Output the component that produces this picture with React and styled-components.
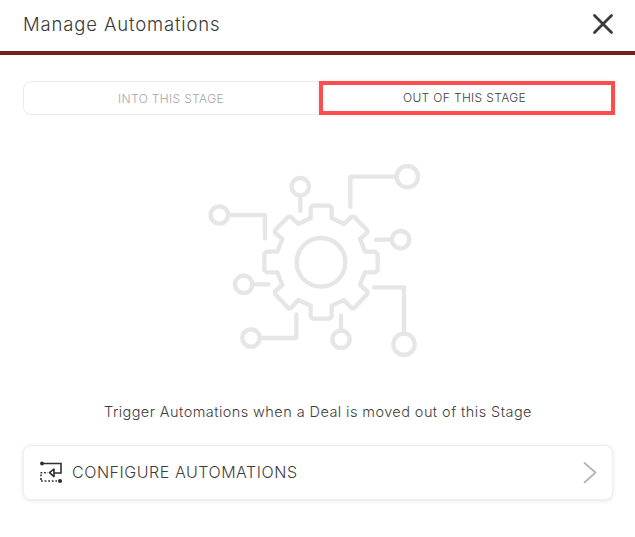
import React from 'react'
import styled, { createGlobalStyle } from 'styled-components'

const GlobalStyle = createGlobalStyle`
  html, body {
    margin: 0;
    padding: 0;
    background: #fff;
  }
  body {
    font-family: Inter, "Open Sans", sans-serif;
    color: #3d3d3d;
  }
`

const Dialog = styled.div`
  width: 635px;
  height: 537px;
  overflow: hidden;
  background: #fff;
`

const Header = styled.header`
  display: flex;
  align-items: center;
  justify-content: space-between;
  padding: 0 21px 3px 23px;
  box-sizing: border-box;
  border-bottom: 4px solid #6f2219;
  height: 55px;
`

const Title = styled.h1`
  margin: 0;
  font-size: 18.5px;
  font-weight: 300;
  letter-spacing: 0.85px;
  color: #3a3a3a;
`

const CloseButton = styled.button`
  display: flex;
  width: 22px;
  height: 22px;
  padding: 0;
  border: 0;
  background: none;
`

const Body = styled.main`
  padding: 26px 20px 0 23px;
  display: flex;
  flex-direction: column;
`

const Tabs = styled.div`
  display: grid;
  grid-template-columns: 296px 296px;
  height: 34px;
  border-radius: 8px;
  box-shadow: inset 0 0 0 1px #ececec;
`

const Tab = styled.button`
  padding: ${p => (p.$active ? '0 5px 2px 0' : '0')};
  background: none;
  border: ${p => (p.$active ? '4px solid #ff4d4d' : '0')};
  box-shadow: ${p => (p.$active ? '-2px 0 3px rgba(0, 0, 0, 0.06)' : 'none')};
  font-family: inherit;
  font-size: 12px;
  font-weight: 300;
  letter-spacing: 0.35px;
  color: ${p => (p.$active ? '#3d3d3d' : '#a5a5a5')};
`

const Illustration = styled.svg`
  display: block;
  width: 240px;
  height: 210px;
  margin: 40px 0 0 172px;
`

const Caption = styled.p`
  margin: 37px 0 0;
  padding-right: 2px;
  text-align: center;
  font-size: 14.5px;
  font-weight: 300;
  line-height: 20px;
  letter-spacing: 0.43px;
  color: #3d3d3d;
`

const ConfigureCard = styled.button`
  margin-top: 23px;
  width: 590px;
  height: 55px;
  display: flex;
  align-items: center;
  padding: 0 15px;
  box-sizing: border-box;
  background: #fff;
  border: 1px solid #efefef;
  border-radius: 8px;
  box-shadow: 0 1px 4px rgba(0, 0, 0, 0.1);
  font-family: inherit;
`

const CardLabel = styled.span`
  flex: 1;
  margin: 0 0 2px 9px;
  text-align: left;
  font-size: 16px;
  font-weight: 300;
  letter-spacing: 0.55px;
  color: #3d3d3d;
`

const CloseIcon = () => (
  <svg width="22" height="22" viewBox="0 0 22 22" fill="none" stroke="#3a3a3a" strokeWidth="2.8" strokeLinecap="round">
    <path d="M2.5 2.5l17 17M19.5 2.5l-17 17" />
  </svg>
)

const GearIllustration = () => (
  <Illustration viewBox="0 0 720 630" fill="none" stroke="#e6e6e6" strokeWidth="13" strokeLinecap="round" strokeLinejoin="round">
    <path d="M347 190V158L353 152H404L410 158V190L447 207L470 185H477L517 226V233L495 252L510 290H541L548 297V345L541 352H510L495 390L517 409V417L477 460H470L447 435L410 452V484L404 491H353L347 484V452L310 435L287 460H280L240 417V409L262 390L247 352H215L208 345V297L215 290H247L262 252L240 233V226L280 185H287L310 207Z" />
    <circle cx="378" cy="322" r="73" />
    <circle cx="73" cy="180" r="26" />
    <path d="M100 180H210V250" />
    <circle cx="316" cy="95" r="26" />
    <path d="M316 122V168" />
    <circle cx="637" cy="65" r="32" />
    <path d="M605 65H466V155" />
    <circle cx="617" cy="254" r="26" />
    <path d="M590 254H543" />
    <circle cx="146" cy="388" r="26" />
    <path d="M173 388H220" />
    <circle cx="627" cy="568" r="32" />
    <path d="M627 535V397H538" />
    <circle cx="438" cy="553" r="26" />
    <path d="M438 527V482" />
    <circle cx="168" cy="549" r="26" />
    <path d="M195 549H304V478" />
  </Illustration>
)

const AutomationIcon = () => (
  <svg width="24" height="23" viewBox="0 0 24 23" fill="none" stroke="#2f2f2f" strokeWidth="1.6" style={{ flexShrink: 0 }}>
    <circle cx="3" cy="2.5" r="1.9" fill="#2f2f2f" stroke="none" />
    <path d="M3 2.5H22V12H15" />
    <path d="M10.5 11.7L15 8V15.6Z" strokeWidth="1.6" strokeLinejoin="round" />
    <path d="M1.5 11.7H9M2 13.5V20M2 20H18" strokeDasharray="1.8 1.8" />
    <circle cx="21" cy="20" r="2.1" fill="#2f2f2f" stroke="none" />
  </svg>
)

const Chevron = () => (
  <svg width="14" height="22" viewBox="0 0 14 22" fill="none" stroke="#b5b5b5" strokeWidth="1.8" strokeLinecap="round" strokeLinejoin="round" style={{ flexShrink: 0 }}>
    <path d="M1.5 1L12.5 10.5L1.5 20.5" />
  </svg>
)

export default function App() {
  return (
    <Dialog>
      <GlobalStyle />
      <Header>
        <Title>Manage Automations</Title>
        <CloseButton aria-label="Close"><CloseIcon /></CloseButton>
      </Header>
      <Body>
        <Tabs>
          <Tab>INTO THIS STAGE</Tab>
          <Tab $active>OUT OF THIS STAGE</Tab>
        </Tabs>
        <GearIllustration />
        <Caption>Trigger Automations when a Deal is moved out of this Stage</Caption>
        <ConfigureCard>
          <AutomationIcon />
          <CardLabel>CONFIGURE AUTOMATIONS</CardLabel>
          <Chevron />
        </ConfigureCard>
      </Body>
    </Dialog>
  )
}
